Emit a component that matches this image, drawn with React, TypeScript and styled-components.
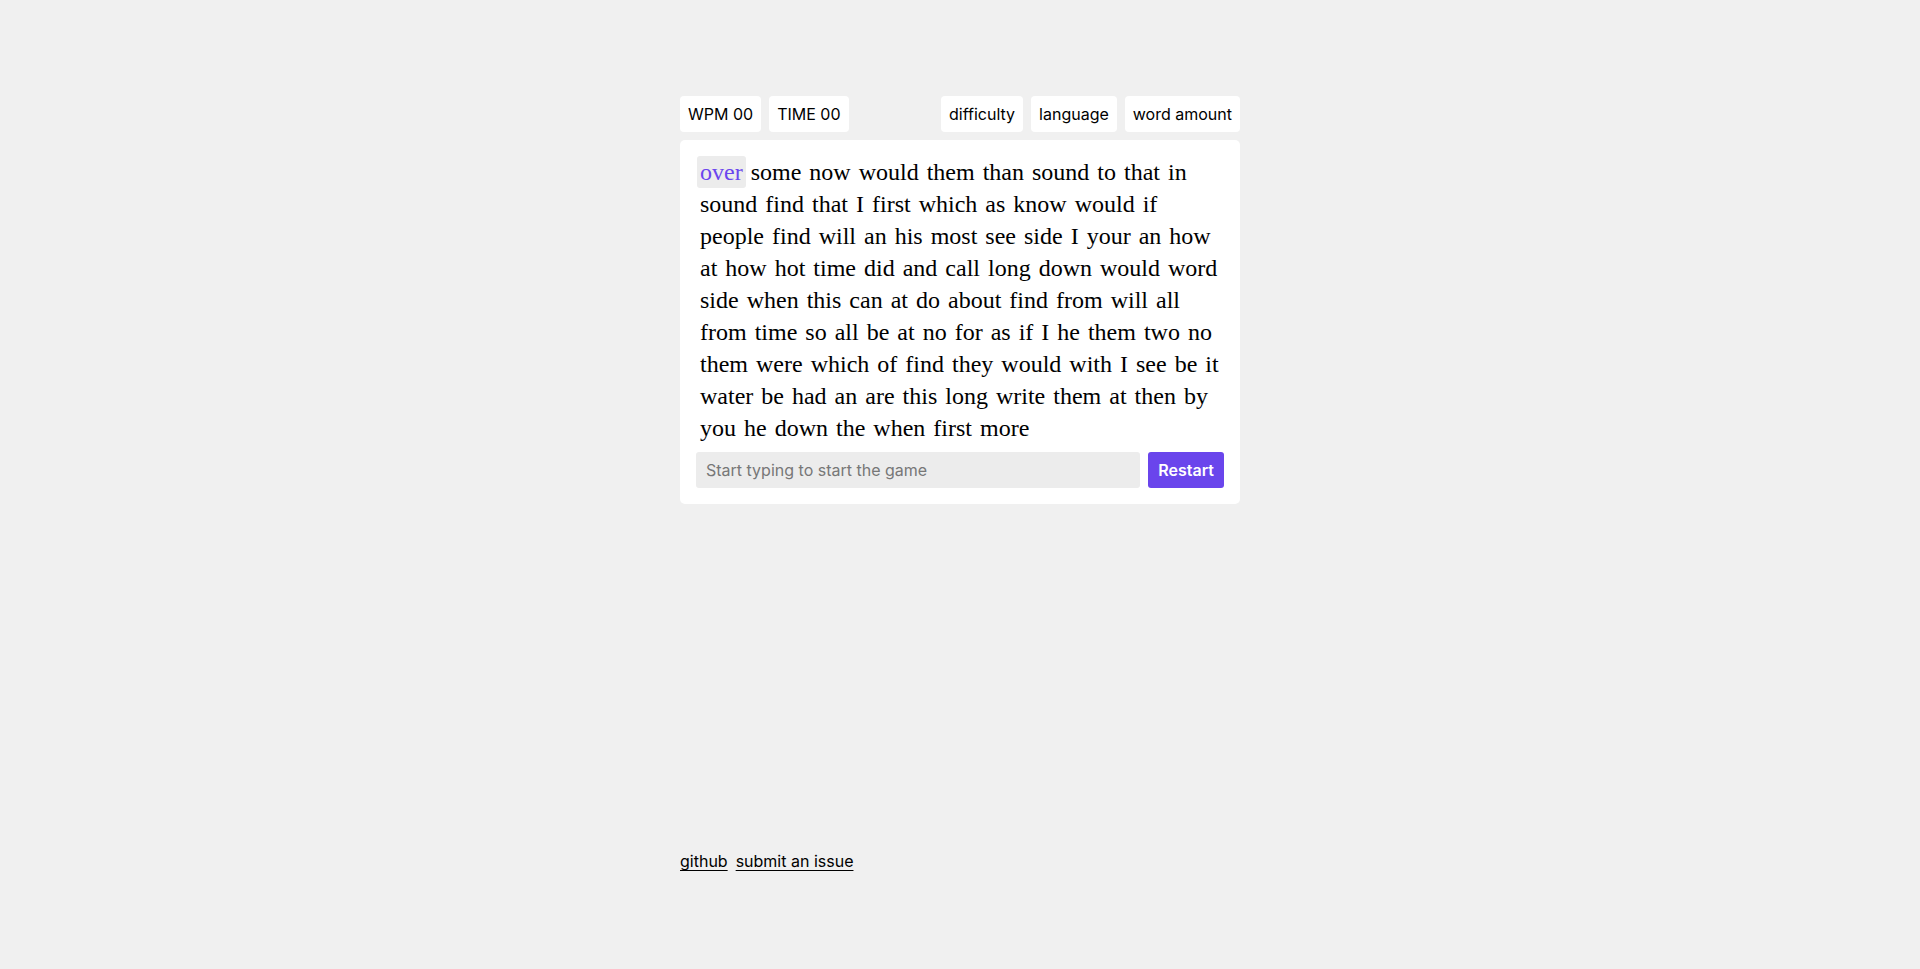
import React, { useState } from 'react'
import styled, { createGlobalStyle } from 'styled-components'

const GlobalStyle = createGlobalStyle`
  * { box-sizing: border-box; }
  body {
    margin: 0;
    background: #f0f0f0;
    font-family: Inter, "Noto Sans", sans-serif;
    color: #000;
  }
`

const Page = styled.div`
  min-height: 100vh;
  padding: 96px 0 96px;
  display: flex;
  flex-direction: column;
  align-items: center;
`

const Main = styled.main`
  width: 560px;
  flex: 1;
  display: flex;
  flex-direction: column;
  gap: 8px;
`

const Toolbar = styled.div`
  display: flex;
  justify-content: space-between;
`

const Group = styled.div`
  display: flex;
  gap: 8px;
`

const Chip = styled.button`
  background: #fff;
  border: none;
  border-radius: 4px;
  padding: 6px 8px;
  font-family: Inter, sans-serif;
  font-size: 16px;
  line-height: 24px;
  color: #000;
  cursor: pointer;
`

const Card = styled.section`
  background: #fff;
  border-radius: 5px;
  padding: 16px;
  display: flex;
  flex-direction: column;
  gap: 8px;
`

const Words = styled.div`
  padding: 0 1px;
  font-family: "Liberation Serif", "Times New Roman", serif;
  font-size: 24px;
  line-height: 32px;
`

const Word = styled.span<{ $active?: boolean }>`
  display: inline-block;
  padding: 0 3px;
  margin-right: -4px;
  border-radius: 3px;
  color: ${(p) => (p.$active ? '#6b46ee' : '#000')};
  background: ${(p) => (p.$active ? '#ececec' : 'transparent')};
`

const InputRow = styled.div`
  display: flex;
  gap: 8px;
`

const TypeInput = styled.input`
  flex: 1;
  height: 36px;
  border: none;
  border-radius: 3px;
  background: #ececec;
  padding: 0 10px;
  font-family: Inter, sans-serif;
  font-size: 16px;
  color: #000;
  outline: none;

  &::placeholder {
    color: #777;
  }
`

const RestartButton = styled.button`
  height: 36px;
  padding: 0 10px;
  border: none;
  border-radius: 3px;
  background: #6a45ec;
  color: #fff;
  font-family: Inter, sans-serif;
  font-size: 16px;
  font-weight: 600;
  cursor: pointer;
`

const Footer = styled.footer`
  width: 560px;
  display: flex;
  gap: 8px;
  font-size: 16px;
  line-height: 24px;

  a {
    color: #000;
    text-decoration: underline;
    text-underline-offset: 3px;
  }
`

const text =
  'over some now would them than sound to that in sound find that I first which as know would if people find will an his most see side I your an how at how hot time did and call long down would word side when this can at do about find from will all from time so all be at no for as if I he them two no them were which of find they would with I see be it water be had an are this long write them at then by you he down the when first more'

export default function App() {
  const [value, setValue] = useState('')
  const words = text.split(' ')

  return (
    <>
      <GlobalStyle />
      <Page>
        <Main>
          <Toolbar>
            <Group>
              <Chip>WPM 00</Chip>
              <Chip>TIME 00</Chip>
            </Group>
            <Group>
              <Chip>difficulty</Chip>
              <Chip>language</Chip>
              <Chip>word amount</Chip>
            </Group>
          </Toolbar>
          <Card>
            <Words>
              {words.map((w, i) => (
                <React.Fragment key={i}>
                  <Word $active={i === 0}>{w}</Word>{' '}
                </React.Fragment>
              ))}
            </Words>
            <InputRow>
              <TypeInput
                value={value}
                onChange={(e) => setValue(e.target.value)}
                placeholder="Start typing to start the game"
              />
              <RestartButton>Restart</RestartButton>
            </InputRow>
          </Card>
        </Main>
        <Footer>
          <a href="#">github</a>
          <a href="#">submit an issue</a>
        </Footer>
      </Page>
    </>
  )
}
